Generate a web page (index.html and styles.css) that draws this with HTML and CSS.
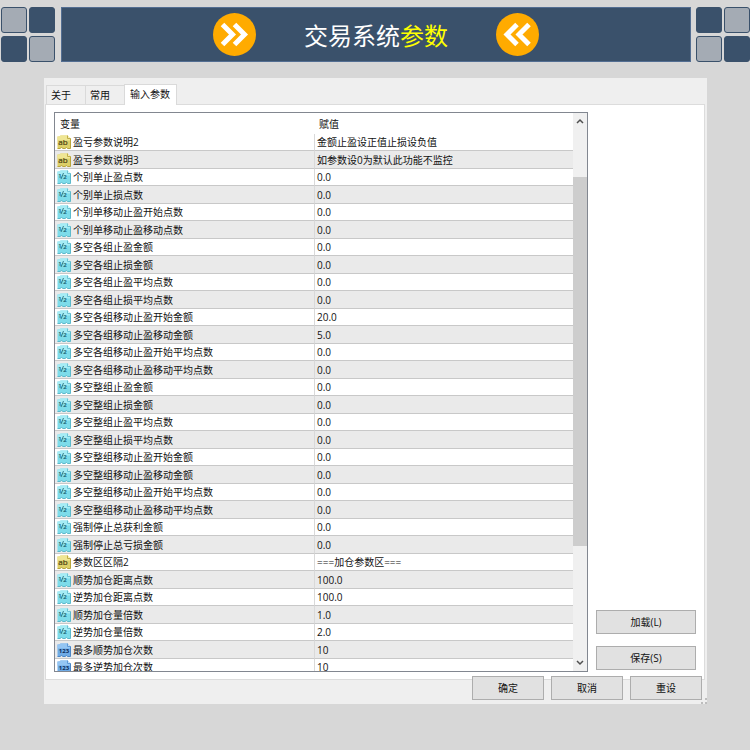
FILE: index.html
```html
<!DOCTYPE html>
<html lang="zh-CN">
<head>
<meta charset="UTF-8">
<meta name="viewport" content="width=device-width, initial-scale=1.0">
<title>交易系统参数</title>
<link rel="stylesheet" href="styles.css">
</head>
<body>

<!-- Shared icons -->
<svg class="sprite" aria-hidden="true">
    <symbol id="text" viewBox="0 0 14 14">
        <path d="M.5 1.500h2l1-1h7l3 3v10h-3l-1-1-1.500 1h-2l-1.500-1-1.500 1H.5z" fill="#ddd068"/>
        <path d="M.5 1.500h2l1-1h7v3h3v2H.5z" fill="#efe694"/>
        <path d="M10.500.5v3h3" fill="#f8f2b4" stroke="#c0ad48"/>
        <path d="M13.500 3.500v10h-3l-1-1-1.500 1h-2l-1.500-1-1.500 1H.5" fill="none" stroke="#b9a63c"/>
        <text x="6" y="10" text-anchor="middle" font-size="8" fill="#4d4415" stroke="#4d4415" stroke-width="0.2">ab</text>
    </symbol>
    <symbol id="real" viewBox="0 0 14 14">
        <path d="M.5 1.500h2l1-1h7l3 3v10h-3l-1-1-1.500 1h-2l-1.500-1-1.500 1H.5z" fill="#7ddcea"/>
        <path d="M.5 1.500h2l1-1h7v3h3v2H.5z" fill="#a5ecf5"/>
        <path d="M10.500.5v3h3" fill="#d2f7fb" stroke="#6cc3d4"/>
        <path d="M13.500 3.500v10h-3l-1-1-1.500 1h-2l-1.500-1-1.500 1H.5" fill="none" stroke="#5cb9cb"/>
        <text x="3" y="8" text-anchor="middle" font-size="6" fill="#17606f" stroke="#17606f" stroke-width="0.2">1</text>
        <path d="M4 9l2.500-6" stroke="#17606f" stroke-width="0.800"/>
        <text x="8" y="9" text-anchor="middle" font-size="6" fill="#17606f" stroke="#17606f" stroke-width="0.2">2</text>
    </symbol>
    <symbol id="int" viewBox="0 0 14 14">
        <path d="M.5 1.500h2l1-1h7l3 3v10h-3l-1-1-1.500 1h-2l-1.500-1-1.500 1H.5z" fill="#6fabe6"/>
        <path d="M.5 1.500h2l1-1h7v3h3v2H.5z" fill="#94c5f3"/>
        <path d="M10.500.5v3h3" fill="#c3e0fa" stroke="#5d98d6"/>
        <path d="M13.500 3.500v10h-3l-1-1-1.500 1h-2l-1.500-1-1.500 1H.5" fill="none" stroke="#4a86c6"/>
        <text x="7" y="10" text-anchor="middle" font-size="6" font-weight="bold" fill="#0c2c5c">123</text>
    </symbol>
</svg>

<header class="header">
    <div class="tiles">
        <span class="tile light"></span><span class="tile"></span>
        <span class="tile"></span><span class="tile light"></span>
    </div>
    <div class="banner">
        <svg class="arrow" viewBox="0 0 43 43" aria-hidden="true">
            <circle cx="21.5" cy="21.5" r="21.5" fill="#ffab00"/>
            <path d="M9.500 11.500l10 10-10 10M21.500 11.500l10 10-10 10" fill="none" stroke="#fff" stroke-width="5"/>
        </svg>
        <h1>交易系统<span>参数</span></h1>
        <svg class="arrow" viewBox="0 0 43 43" aria-hidden="true">
            <circle cx="21.5" cy="21.5" r="21.5" fill="#ffab00"/>
            <path d="M21 11.500l-10 10 10 10M33 11.500l-10 10 10 10" fill="none" stroke="#fff" stroke-width="5"/>
        </svg>
    </div>
    <div class="tiles">
        <span class="tile"></span><span class="tile light"></span>
        <span class="tile light"></span><span class="tile"></span>
    </div>
</header>

<main class="dialog">
    <nav class="tabs">
        <button type="button" class="tab">关于</button>
        <button type="button" class="tab">常用</button>
        <button type="button" class="tab active">输入参数</button>
    </nav>

    <div class="panel">
        <div class="list">
            <div class="rows">
                <table>
                    <thead>
                        <tr><th>变量</th><th>赋值</th></tr>
                    </thead>
                    <tbody>
                        <tr><td><svg class="icon"><use href="#text"/></svg>盈亏参数说明2</td><td>金额止盈设正值止损设负值</td></tr>
                        <tr><td><svg class="icon"><use href="#text"/></svg>盈亏参数说明3</td><td>如参数设0为默认此功能不监控</td></tr>
                        <tr><td><svg class="icon"><use href="#real"/></svg>个别单止盈点数</td><td>0.0</td></tr>
                        <tr><td><svg class="icon"><use href="#real"/></svg>个别单止损点数</td><td>0.0</td></tr>
                        <tr><td><svg class="icon"><use href="#real"/></svg>个别单移动止盈开始点数</td><td>0.0</td></tr>
                        <tr><td><svg class="icon"><use href="#real"/></svg>个别单移动止盈移动点数</td><td>0.0</td></tr>
                        <tr><td><svg class="icon"><use href="#real"/></svg>多空各组止盈金额</td><td>0.0</td></tr>
                        <tr><td><svg class="icon"><use href="#real"/></svg>多空各组止损金额</td><td>0.0</td></tr>
                        <tr><td><svg class="icon"><use href="#real"/></svg>多空各组止盈平均点数</td><td>0.0</td></tr>
                        <tr><td><svg class="icon"><use href="#real"/></svg>多空各组止损平均点数</td><td>0.0</td></tr>
                        <tr><td><svg class="icon"><use href="#real"/></svg>多空各组移动止盈开始金额</td><td>20.0</td></tr>
                        <tr><td><svg class="icon"><use href="#real"/></svg>多空各组移动止盈移动金额</td><td>5.0</td></tr>
                        <tr><td><svg class="icon"><use href="#real"/></svg>多空各组移动止盈开始平均点数</td><td>0.0</td></tr>
                        <tr><td><svg class="icon"><use href="#real"/></svg>多空各组移动止盈移动平均点数</td><td>0.0</td></tr>
                        <tr><td><svg class="icon"><use href="#real"/></svg>多空整组止盈金额</td><td>0.0</td></tr>
                        <tr><td><svg class="icon"><use href="#real"/></svg>多空整组止损金额</td><td>0.0</td></tr>
                        <tr><td><svg class="icon"><use href="#real"/></svg>多空整组止盈平均点数</td><td>0.0</td></tr>
                        <tr><td><svg class="icon"><use href="#real"/></svg>多空整组止损平均点数</td><td>0.0</td></tr>
                        <tr><td><svg class="icon"><use href="#real"/></svg>多空整组移动止盈开始金额</td><td>0.0</td></tr>
                        <tr><td><svg class="icon"><use href="#real"/></svg>多空整组移动止盈移动金额</td><td>0.0</td></tr>
                        <tr><td><svg class="icon"><use href="#real"/></svg>多空整组移动止盈开始平均点数</td><td>0.0</td></tr>
                        <tr><td><svg class="icon"><use href="#real"/></svg>多空整组移动止盈移动平均点数</td><td>0.0</td></tr>
                        <tr><td><svg class="icon"><use href="#real"/></svg>强制停止总获利金额</td><td>0.0</td></tr>
                        <tr><td><svg class="icon"><use href="#real"/></svg>强制停止总亏损金额</td><td>0.0</td></tr>
                        <tr><td><svg class="icon"><use href="#text"/></svg>参数区区隔2</td><td>===加仓参数区===</td></tr>
                        <tr><td><svg class="icon"><use href="#real"/></svg>顺势加仓距离点数</td><td>100.0</td></tr>
                        <tr><td><svg class="icon"><use href="#real"/></svg>逆势加仓距离点数</td><td>100.0</td></tr>
                        <tr><td><svg class="icon"><use href="#real"/></svg>顺势加仓量倍数</td><td>1.0</td></tr>
                        <tr><td><svg class="icon"><use href="#real"/></svg>逆势加仓量倍数</td><td>2.0</td></tr>
                        <tr><td><svg class="icon"><use href="#int"/></svg>最多顺势加仓次数</td><td>10</td></tr>
                        <tr><td><svg class="icon"><use href="#int"/></svg>最多逆势加仓次数</td><td>10</td></tr>
                    </tbody>
                </table>
            </div>
            <div class="scrollbar">
                <svg class="chevron" viewBox="0 0 8 6"><path d="M1 5l3-3 3 3" fill="none" stroke="#505050" stroke-width="1.500"/></svg>
                <div class="track"><div class="thumb"></div></div>
                <svg class="chevron" viewBox="0 0 8 6"><path d="M1 1l3 3 3-3" fill="none" stroke="#505050" stroke-width="1.500"/></svg>
            </div>
        </div>
        <div class="side">
            <button type="button" class="btn">加载(L)</button>
            <button type="button" class="btn">保存(S)</button>
        </div>
    </div>

    <footer class="actions">
        <button type="button" class="btn">确定</button>
        <button type="button" class="btn">取消</button>
        <button type="button" class="btn">重设</button>
    </footer>
    <svg class="grip" viewBox="0 0 6 6" aria-hidden="true">
        <path d="M4 0h2v2H4zM4 4h2v2H4zM0 4h2v2H0z" fill="#bdbdbd"/>
    </svg>
</main>

</body>
</html>
```

FILE: styles.css
```css
* {
    box-sizing: border-box;
}
body {
    margin: 0;
    background: #d7d7d7;
    color: #111;
    font-family: "Open Sans", "Noto Sans CJK SC", sans-serif;
    font-size: 10px;
    line-height: 14px;
}
button {
    font: inherit;
    color: inherit;
    padding: 0;
}
.sprite {
    display: none;
}

/* Top banner */
.header {
    display: flex;
    gap: 5px;
    padding: 7px 0 0 1px;
}
.tiles {
    display: grid;
    grid-template-columns: 26px 26px;
    grid-auto-rows: 26px;
    gap: 3px 2px;
}
.tile {
    background: #3a516b;
    border: 1px solid #3a516b;
    border-radius: 3px;
}
.tile.light {
    background: #a4abb4;
}
.banner {
    flex: 1;
    display: flex;
    align-items: center;
    justify-content: center;
    gap: 48px;
    margin-left: 1px;
    background: #3a516b;
    border: 1px solid #536e92;
}
.banner h1 {
    margin: 0;
    padding-top: 3px;
    color: #fff;
    font-size: 24px;
    font-weight: normal;
    line-height: 32px;
}
.banner h1 span {
    color: #ff0;
}
.arrow {
    width: 43px;
    height: 43px;
}

/* Dialog */
.dialog {
    position: relative;
    margin: 16px 43px 0 44px;
    padding: 6px 2px 4px 1px;
    background: #efefef;
}
.tabs {
    display: flex;
    align-items: flex-end;
    padding-left: 1px;
}
.tab {
    height: 19px;
    padding: 0 14px 0 4px;
    border: 1px solid #dadada;
    border-width: 1px 0 0 1px;
    background: #efefef;
}
.tab.active {
    height: 21px;
    margin-bottom: -1px;
    padding: 0 6px 2px 5px;
    border-right-width: 1px;
    background: #fff;
    z-index: 1;
}
.panel {
    display: flex;
    gap: 8px;
    padding: 7px 8px;
    border: 1px solid #dcdcdc;
    background: #fff;
}
.list {
    flex: 1;
    display: flex;
    height: 560px;
    border: 1px solid #828790;
}
.rows {
    flex: 1;
    overflow: hidden;
}

/* Parameter table */
table {
    width: 100%;
    table-layout: fixed;
    border-collapse: separate;
    border-spacing: 0;
}
th {
    height: 21px;
    padding: 0 5px;
    font-weight: normal;
    text-align: left;
}
td {
    height: 17px;
    padding: 0 2px;
    border-bottom: 1px solid #c8c8c8;
    white-space: nowrap;
}
td + td {
    border-left: 1px solid #d9d9d9;
}
tr:nth-child(even) td {
    height: 18px;
    background: #eaeaea;
}
.icon {
    width: 14px;
    height: 14px;
    margin-right: 2px;
    vertical-align: top;
}

/* Scrollbar */
.scrollbar {
    width: 14px;
    display: flex;
    flex-direction: column;
    align-items: center;
    padding: 5px 0;
    background: #f0f0f0;
}
.chevron {
    width: 8px;
    height: 6px;
}
.track {
    flex: 1;
    width: 100%;
    padding: 53px 0 114px;
}
.thumb {
    height: 100%;
    background: #cdcdcd;
}

/* Buttons */
.btn {
    height: 24px;
    border: 1px solid #adadad;
    background: #e1e1e1;
}
.side {
    width: 100px;
    display: flex;
    flex-direction: column;
    justify-content: flex-end;
    gap: 12px;
    padding-bottom: 2px;
}
.actions {
    display: flex;
    justify-content: flex-end;
    gap: 7px;
    margin-top: -4px;
    padding-right: 3px;
}
.actions .btn {
    width: 72px;
}
.grip {
    position: absolute;
    right: 0;
    bottom: 0;
    width: 6px;
    height: 6px;
}
```
